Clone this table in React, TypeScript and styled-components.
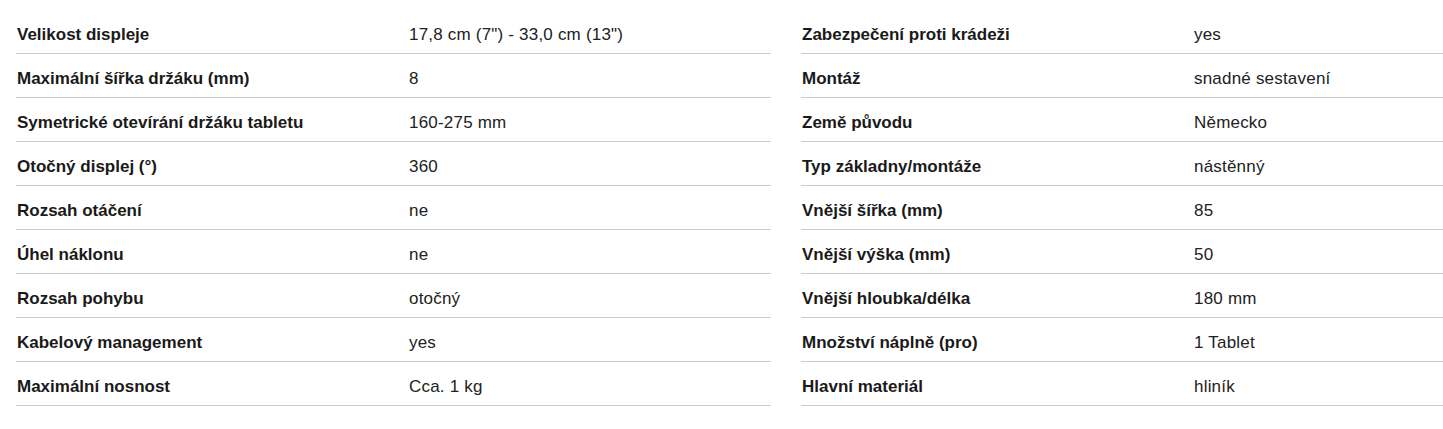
import React from 'react';
import styled, { createGlobalStyle } from 'styled-components';

const GlobalStyle = createGlobalStyle`
  body {
    margin: 0;
    background: #ffffff;
    overflow: hidden;
    font-family: 'Liberation Sans', Arial, sans-serif;
    color: #1a1a1a;
  }
`;

const Page = styled.div`
  display: grid;
  grid-template-columns: 755px 1fr;
  column-gap: 30px;
  padding: 10px 0 0 16px;
`;

const Table = styled.div`
  display: flex;
  flex-direction: column;
`;

const Row = styled.div`
  display: grid;
  grid-template-columns: 393px 1fr;
  align-items: center;
  height: 44px;
  border-bottom: 1px solid #cccccc;
  box-sizing: border-box;
  padding-top: 7px;
  font-size: 17px;
`;

const Label = styled.div`
  font-weight: 700;
  padding-left: 1px;
`;

const Value = styled.div`
  font-weight: 400;
  color: #222222;
  letter-spacing: 0.2px;
`;

type Spec = [string, string];

const left: Spec[] = [
  ['Velikost displeje', '17,8 cm (7") - 33,0 cm (13")'],
  ['Maximální šířka držáku (mm)', '8'],
  ['Symetrické otevírání držáku tabletu', '160-275 mm'],
  ['Otočný displej (°)', '360'],
  ['Rozsah otáčení', 'ne'],
  ['Úhel náklonu', 'ne'],
  ['Rozsah pohybu', 'otočný'],
  ['Kabelový management', 'yes'],
  ['Maximální nosnost', 'Cca. 1 kg'],
];

const right: Spec[] = [
  ['Zabezpečení proti krádeži', 'yes'],
  ['Montáž', 'snadné sestavení'],
  ['Země původu', 'Německo'],
  ['Typ základny/montáže', 'nástěnný'],
  ['Vnější šířka (mm)', '85'],
  ['Vnější výška (mm)', '50'],
  ['Vnější hloubka/délka', '180 mm'],
  ['Množství náplně (pro)', '1 Tablet'],
  ['Hlavní materiál', 'hliník'],
];

function SpecTable({ rows }: { rows: Spec[] }) {
  return (
    <Table>
      {rows.map(([label, value], index) => (
        <Row key={index}>
          <Label>{label}</Label>
          <Value>{value}</Value>
        </Row>
      ))}
    </Table>
  );
}

export default function App() {
  return (
    <>
      <GlobalStyle />
      <Page>
        <SpecTable rows={left} />
        <SpecTable rows={right} />
      </Page>
    </>
  );
}
